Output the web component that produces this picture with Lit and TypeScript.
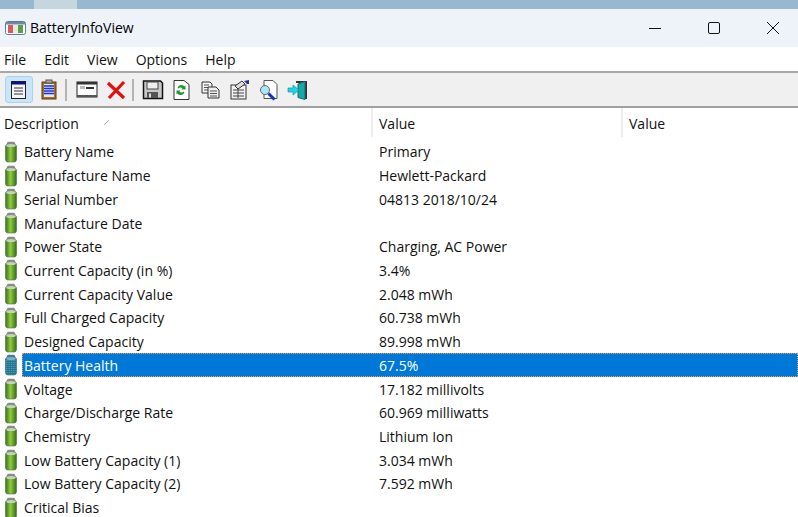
import { LitElement, html, css, svg } from "lit";
import { customElement } from "lit/decorators.js";

const rows: [string, string][] = [
  ["Battery Name", "Primary"],
  ["Manufacture Name", "Hewlett-Packard"],
  ["Serial Number", "04813 2018/10/24"],
  ["Manufacture Date", ""],
  ["Power State", "Charging, AC Power"],
  ["Current Capacity (in %)", "3.4%"],
  ["Current Capacity Value", "2.048 mWh"],
  ["Full Charged Capacity", "60.738 mWh"],
  ["Designed Capacity", "89.998 mWh"],
  ["Battery Health", "67.5%"],
  ["Voltage", "17.182 millivolts"],
  ["Charge/Discharge Rate", "60.969 milliwatts"],
  ["Chemistry", "Lithium Ion"],
  ["Low Battery Capacity (1)", "3.034 mWh"],
  ["Low Battery Capacity (2)", "7.592 mWh"],
  ["Critical Bias", ""],
];

const battery = (sel: boolean) => html`<svg class="bat" width="14" height="22" viewBox="0 0 16 22" preserveAspectRatio="none">
  <defs>
    <linearGradient id="bg" x1="0" x2="1" y1="0" y2="0">
      <stop offset="0" stop-color="#3a6f20"/>
      <stop offset=".45" stop-color="#90cc3c"/>
      <stop offset="1" stop-color="#356a1c"/>
    </linearGradient>
    <pattern id="dith" width="2" height="2" patternUnits="userSpaceOnUse">
      <rect width="2" height="2" fill="#1f78b8"/>
      <rect width="1" height="1" fill="#5aa878"/>
      <rect x="1" y="1" width="1" height="1" fill="#2a6a78"/>
    </pattern>
  </defs>
  <path d="M5 .8h6q2 .2 2 2.500H3q0-2.300 2-2.500z" fill=${sel ? "#3a80a0" : "#8a8a8a"}/>
  <path d="M3 3.500h10q1.300.5 1.300 2v13q0 2.300-2.300 2.500H4q-2.300-.2-2.300-2.500v-13q0-1.500 1.300-2z" fill=${sel ? "url(#dith)" : "url(#bg)"} stroke=${sel ? "#1f5f80" : "#4a6f38"} stroke-width=".6"/>
  <ellipse cx="8" cy="4.500" rx="5.500" ry="1.500" fill=${sel ? "#7ab0c0" : "#c4d4b8"}/>
</svg>`;

const icons = [
  svg`<rect x="3.500" y="2.500" width="14" height="17" fill="#f6f6f6" stroke="#222"/><rect x="3.500" y="2.500" width="14" height="3" fill="#10107a"/><path d="M6 9h9M6 12h9M6 15h9" stroke="#333"/>`,
  svg`<rect x="4" y="3" width="14" height="17" fill="#a8701e" stroke="#5a3a10"/><rect x="6" y="5" width="10" height="13" fill="#dfe6ff"/><path d="M6 7h10M6 9.500h10M6 12h10M6 14.500h10" stroke="#1b2fe0" stroke-width="1.300"/><rect x="8" y="1" width="6" height="3" fill="#aaa" stroke="#555"/>`,
  svg`<rect x="1" y="3" width="20" height="15" fill="#fff" stroke="#222"/><rect x="1" y="3" width="20" height="2.500" fill="#333"/><rect x="4" y="7" width="5" height="3" fill="#bbb"/><path d="M10 9h8" stroke="#333" stroke-width="2"/><path d="M1 17h20" stroke="#555" stroke-width="2"/>`,
  svg`<path d="M3 4l16 15M19 3L4 19" stroke="#e01010" stroke-width="3.200"/>`,
  svg`<path d="M1.500 2h17l2 2v15.500h-19z" fill="#c8c8c8" stroke="#111" stroke-width="1.500"/><rect x="5" y="3" width="11" height="7" fill="#eee" stroke="#444"/><rect x="5" y="13" width="11" height="6" fill="#555"/><rect x="7" y="14.500" width="2" height="4" fill="#ddd"/>`,
  svg`<path d="M3 1.500h10l5 4v15h-15z" fill="#fff" stroke="#333"/><path d="M6.500 9a4 4 0 0 1 7-1.500l1-1v4h-4l1-1a2.500 2.500 0 0 0-4 0z" fill="#1a9a30"/><path d="M13.500 13a4 4 0 0 1-7 1.500l-1 1v-4h4l-1 1a2.500 2.500 0 0 0 4 0z" fill="#1a9a30"/>`,
  svg`<path d="M2 3h8l2 2v9H2z" fill="#f4f4f4" stroke="#333"/><path d="M4 6h5M4 8.500h5M4 11h5" stroke="#555"/><path d="M8 8h8l3 3v8H8z" fill="#eee" stroke="#333"/><path d="M10 12h7M10 14.500h7M10 17h7" stroke="#555"/>`,
  svg`<rect x="2" y="6" width="15" height="14" fill="#f2f2f2" stroke="#333"/><path d="M4 11h11M4 14h11M4 17h11M9 9v10" stroke="#444"/><path d="M6 7l7-5 3 3-7 5z" fill="#ddd" stroke="#333"/><path d="M15 2l5-1v4h-2z" fill="#2030a0"/>`,
  svg`<path d="M6 1.500h9l4 4v14h-13z" fill="#fff" stroke="#555"/><circle cx="7" cy="11" r="4.500" fill="#a8e8f4" stroke="#667"/><path d="M10.500 14.500l6 6" stroke="#1030d0" stroke-width="3"/>`,
  svg`<path d="M9 3h10v16h-2" fill="none" stroke="#333" stroke-width="2"/><path d="M11 5l7-2.500v18l-7-2z" fill="#18a8a8" stroke="#0e6e6e"/><path d="M1 9h5V6l6 5-6 5v-3H1z" fill="#18d8e8" stroke="#0a8a98" stroke-width=".6"/>`,
];

@customElement("app-root")
export class AppRoot extends LitElement {
  static styles = css`
    :host { display: block; width: 798px; height: 517px; overflow: hidden; background: #fff;
      font-family: "Open Sans", "Noto Sans", sans-serif; font-size: 14px; color: #111; }
    .wall { height: 9px; background: #98b8cf; display: flex; padding-left: 34px; }
    .wall i { width: 43px; background: #c6d6de; }
    .title { height: 38px; background: #eef2f9; display: flex; align-items: center; padding-left: 5px; }
    .title .name { margin-left: 4px; font-size: 14px; color: #000; position: relative; top: -1px; }
    .title .caps { margin-left: auto; margin-right: -4px; display: flex; }
    .cap { width: 59px; height: 38px; display: flex; align-items: center; justify-content: center; }
    .menu { height: 24px; display: flex; align-items: center; gap: 18px; padding-left: 4px; box-sizing: border-box; }
    .tool { height: 37px; background: #f0f0f0; border-top: 2px solid #a8a8a8; border-bottom: 2px solid #a0a0a0;
      box-sizing: border-box; display: flex; align-items: center; padding-left: 5px; }
    .btn { width: 29px; height: 27px; display: flex; align-items: center; justify-content: center; box-sizing: border-box; }
    .btn.on { background: #cce4f7; border: 1px solid #a8d2f2; border-radius: 3px; width: 28px; margin-right: 1px; }
    .sep { width: 2px; height: 22px; background: #b4b4b4; margin: 0 5px 0 2px; }
    .sep.b { margin-right: 4px; }
    .head { height: 32px; display: grid; grid-template-columns: 371px 250px 1fr; align-items: start; }
    .hc { display: flex; align-items: center; padding-left: 4px; padding-bottom: 1px; box-sizing: border-box; height: 29px; }
    .hc + .hc { border-left: 2px solid #ededed; padding-left: 6px; }
    .hc span { position: relative; top: 1px; }
    .sort { margin-left: 24px; }
    .row { height: 23.730px; display: grid; grid-template-columns: 371px 1fr; align-items: center; position: relative; }
    .lab { display: flex; align-items: center; height: 100%; padding-left: 4px; }
    .bat { flex: none; margin-right: 2px; }
    .txt { padding-left: 4px; }
    .val { padding-left: 8px; }
    .row.sel { color: #fff; background: linear-gradient(90deg, #fff 0 22px, #0078d7 22px); }
    .row.sel::after { content: ""; position: absolute; left: 22px; right: 0; top: 0; bottom: 0; border: 1px dotted #f0a040; box-sizing: border-box; }
  `;

  render() {
    const ic = (i: number, on = false) => html`<span class="btn ${on ? "on" : ""}"><svg width="22" height="22" viewBox="0 0 22 22">${icons[i]}</svg></span>`;
    return html`
      <div class="wall"><i></i></div>
      <div class="title">
        <svg width="21" height="14" viewBox="0 0 21 14">
          <rect x=".5" y=".5" width="20" height="13" rx="2" fill="#fff" stroke="#5a7aa0"/>
          <rect x="1" y="1" width="19" height="2.500" fill="#6a88aa"/>
          <rect x="3" y="4" width="5" height="8" fill="#d85a5a"/>
          <rect x="8" y="4" width="5" height="8" fill="#e8e8e8"/>
          <rect x="13" y="4" width="5" height="8" fill="#5ca040"/>
        </svg>
        <span class="name">BatteryInfoView</span>
        <span class="caps">
          <span class="cap"><svg width="14" height="14"><path d="M1 7.500h12" stroke="#111"/></svg></span>
          <span class="cap"><svg width="14" height="14"><rect x="1.500" y="1.500" width="11" height="11" rx="1.500" fill="none" stroke="#111"/></svg></span>
          <span class="cap"><svg width="14" height="14"><path d="M1 1l12 12M13 1L1 13" stroke="#111"/></svg></span>
        </span>
      </div>
      <div class="menu"><span>File</span><span>Edit</span><span>View</span><span>Options</span><span>Help</span></div>
      <div class="tool">
        ${ic(0, true)}${ic(1)}<span class="sep"></span>${ic(2)}${ic(3)}<span class="sep b"></span>
        ${ic(4)}${ic(5)}${ic(6)}${ic(7)}${ic(8)}${ic(9)}
      </div>
      <div class="head">
        <div class="hc"><span>Description</span><svg class="sort" width="8" height="8"><path d="M1 7l5-5" stroke="#aaa"/></svg></div>
        <div class="hc"><span>Value</span></div>
        <div class="hc"><span>Value</span></div>
      </div>
      ${rows.map(([a, b]) => {
        const sel = a === "Battery Health";
        return html`<div class="row ${sel ? "sel" : ""}">
          <div class="lab">${battery(sel)}<span class="txt">${a}</span></div>
          <div class="val">${b}</div>
        </div>`;
      })}
    `;
  }
}
